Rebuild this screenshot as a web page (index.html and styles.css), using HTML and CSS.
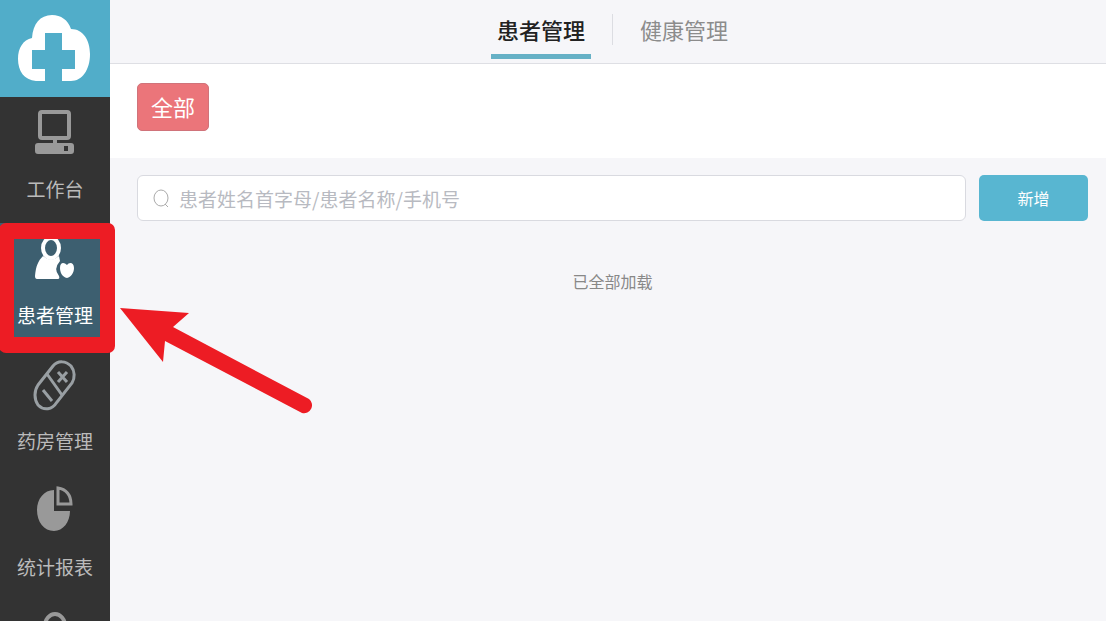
FILE: index.html
```html
<!DOCTYPE html>
<html lang="zh-CN">

<head>
    <meta charset="UTF-8">
    <meta name="viewport" content="width=device-width, initial-scale=1.0">
    <title>患者管理</title>
    <link rel="stylesheet" href="styles.css">
</head>

<body>
    <div class="app">
        <aside class="sidebar">
            <a class="logo" href="#" aria-label="首页">
                <svg width="72" height="68" viewBox="0 0 72 68">
                    <path fill="#fff" d="M18 66C6 65 0 56 0 44C0 33 5 25 14 23C15 9 22 0 34 0C43 0 50 5 53 14C65 14 72 25 72 39C72 55 64 66 53 66H44V54H57V35H44V18H27V35H14V54H27V66Z"/>
                </svg>
            </a>
            <nav class="menu">
                <a class="menu-item" href="#">
                    <svg class="menu-icon" width="44" height="52" viewBox="0 0 44 52">
                        <rect x="7" y="4" width="29" height="26" rx="2" fill="none" stroke="#999" stroke-width="4"/>
                        <path fill="#999" d="M20 31h4v5h-4z"/>
                        <path fill="#999" fill-rule="evenodd" d="M5 35h33a3 3 0 0 1 3 3v5a3 3 0 0 1-3 3H5a3 3 0 0 1-3-3v-5a3 3 0 0 1 3-3zM31 38v5h4v-5z"/>
                    </svg>
                    <span>工作台</span>
                </a>
                <a class="menu-item active" href="#">
                    <svg class="menu-icon" width="44" height="52" viewBox="0 0 44 52">
                        <ellipse cx="18" cy="14" rx="8" ry="10" fill="none" stroke="#fff" stroke-width="4"/>
                        <path fill="#fff" d="M10 22Q18 29 26 22L27 27Q20 35 26 42Q27 45 25 45H4Q2 45 2 42C3 32 5 27 10 22Z"/>
                        <path fill="#fff" d="M34 44C29 43 27 38 27 34C27 28 31 28 34 31C36 28 41 28 41 34C41 39 38 43 34 44Z"/>
                    </svg>
                    <span>患者管理</span>
                </a>
                <a class="menu-item" href="#">
                    <svg class="menu-icon" width="44" height="52" viewBox="0 0 44 52">
                        <g fill="none" stroke="#999fa3" stroke-width="3">
                            <path d="M5 25L20 6C25 0 33 1 38 6C42 11 42 18 39 23L24 42C19 50 11 51 5 45C1 39 1 31 5 25Z"/>
                            <path d="M14 14L29 35M10 30L19 41"/>
                            <path d="M25 12L34 22M34 12L25 22"/>
                        </g>
                    </svg>
                    <span>药房管理</span>
                </a>
                <a class="menu-item" href="#">
                    <svg class="menu-icon" width="44" height="52" viewBox="0 0 44 52">
                        <path fill="#999" d="M21 4V25H37C37 36 30 45 21 45C11 45 4 36 4 24C4 13 11 4 21 4Z"/>
                        <path fill="none" stroke="#999" stroke-width="3" d="M25 2V18H38C38 9 33 3 25 2Z"/>
                    </svg>
                    <span>统计报表</span>
                </a>
                <a class="menu-item" href="#" aria-label="我的">
                    <svg class="menu-icon" width="44" height="52" viewBox="0 0 44 52">
                        <ellipse cx="22" cy="14" rx="10" ry="12" fill="none" stroke="#999" stroke-width="4"/>
                    </svg>
                </a>
            </nav>
        </aside>

        <div class="content">
            <header class="tabs">
                <a class="tab current" href="#">患者管理</a>
                <span class="divider"></span>
                <a class="tab" href="#">健康管理</a>
            </header>

            <div class="filters">
                <button class="filter" type="button">全部</button>
            </div>

            <main>
                <form class="search">
                    <label class="search-box">
                        <svg width="18" height="20" viewBox="0 0 18 20" fill="none" stroke="#aaa">
                            <ellipse cx="9" cy="10" rx="7" ry="8"/>
                            <path d="M13 16L16 19"/>
                        </svg>
                        <input type="text" aria-label="搜索患者" placeholder="患者姓名首字母/患者名称/手机号">
                    </label>
                    <button class="add" type="button">新增</button>
                </form>
                <p class="loaded">已全部加载</p>
            </main>
        </div>

        <div class="highlight"></div>
        <svg class="arrow" width="196" height="110" viewBox="0 0 196 110">
            <path fill="#ed1c24" d="M0 0L69 5L53 19L189 91A8 8 0 0 1 182 105L45 33L43 54Z"/>
        </svg>
    </div>
</body>

</html>
```

FILE: styles.css
```css
* {
    margin: 0;
    padding: 0;
    box-sizing: border-box;
}

body {
    font-family: "Noto Sans CJK SC", sans-serif;
    background: #fff;
    color: #333;
}

a {
    color: inherit;
    text-decoration: none;
}

button,
input {
    font-family: inherit;
    border: none;
}

.app {
    position: relative;
    display: flex;
    height: 100vh;
    padding-bottom: 2px;
    overflow: hidden;
}

/* Sidebar */
.sidebar {
    flex: 0 0 110px;
    background: #333;
    overflow: hidden;
}

.logo {
    display: flex;
    align-items: center;
    justify-content: center;
    height: 97px;
    padding-right: 2px;
    background: #51adc9;
}

.menu-item {
    display: flex;
    flex-direction: column;
    align-items: center;
    gap: 13px;
    height: 126px;
    padding-top: 11px;
    font-size: 19px;
    line-height: 32px;
    color: #bbb;
}

.menu-item.active {
    background: #3d5f70;
    color: #fff;
}

.menu-icon {
    flex: none;
}

/* Content */
.content {
    flex: 1;
    min-width: 0;
    background: #f6f6f9;
}

.tabs {
    display: flex;
    justify-content: center;
    gap: 21px;
    height: 64px;
    padding-left: 9px;
    border-bottom: 1px solid #dedfe4;
}

.tab {
    height: 59px;
    padding: 0 6px;
    font-size: 22px;
    line-height: 58px;
    color: #8c8c8c;
}

.tab.current {
    border-bottom: 5px solid #66b1c6;
    font-weight: 500;
    color: #222;
}

.divider {
    width: 1px;
    height: 31px;
    margin-top: 14px;
    background: #dcdde2;
}

.filters {
    padding: 19px 27px 27px;
    background: #fff;
}

.filter {
    display: block;
    height: 48px;
    padding: 0 13px 2px;
    border: 1px solid #d0737a;
    border-radius: 5px;
    background: #eb757a;
    font-size: 22px;
    color: #fff;
}

main {
    padding: 17px 18px 0 27px;
}

.search {
    display: flex;
    gap: 13px;
}

.search-box {
    flex: 1;
    display: flex;
    align-items: center;
    gap: 9px;
    height: 46px;
    padding: 0 14px;
    border: 1px solid #d9dae0;
    border-radius: 6px;
    background: #fff;
}

.search-box input {
    flex: 1;
    min-width: 0;
    height: 100%;
    background: none;
    font-size: 19px;
    outline: none;
}

.search-box input::placeholder {
    color: #b8bac1;
}

.add {
    width: 109px;
    border-radius: 5px;
    background: #58b6d1;
    font-size: 16px;
    color: #fff;
}

.loaded {
    margin-top: 46px;
    font-size: 16px;
    line-height: 28px;
    text-align: center;
    color: #888;
}

/* Marker around the active menu item */
.highlight {
    position: absolute;
    top: 223px;
    left: -1px;
    width: 116px;
    height: 130px;
    border: 15px solid #ed1c24;
    border-width: 16px 15px;
    border-radius: 7px;
}

.arrow {
    position: absolute;
    top: 308px;
    left: 120px;
}
```
